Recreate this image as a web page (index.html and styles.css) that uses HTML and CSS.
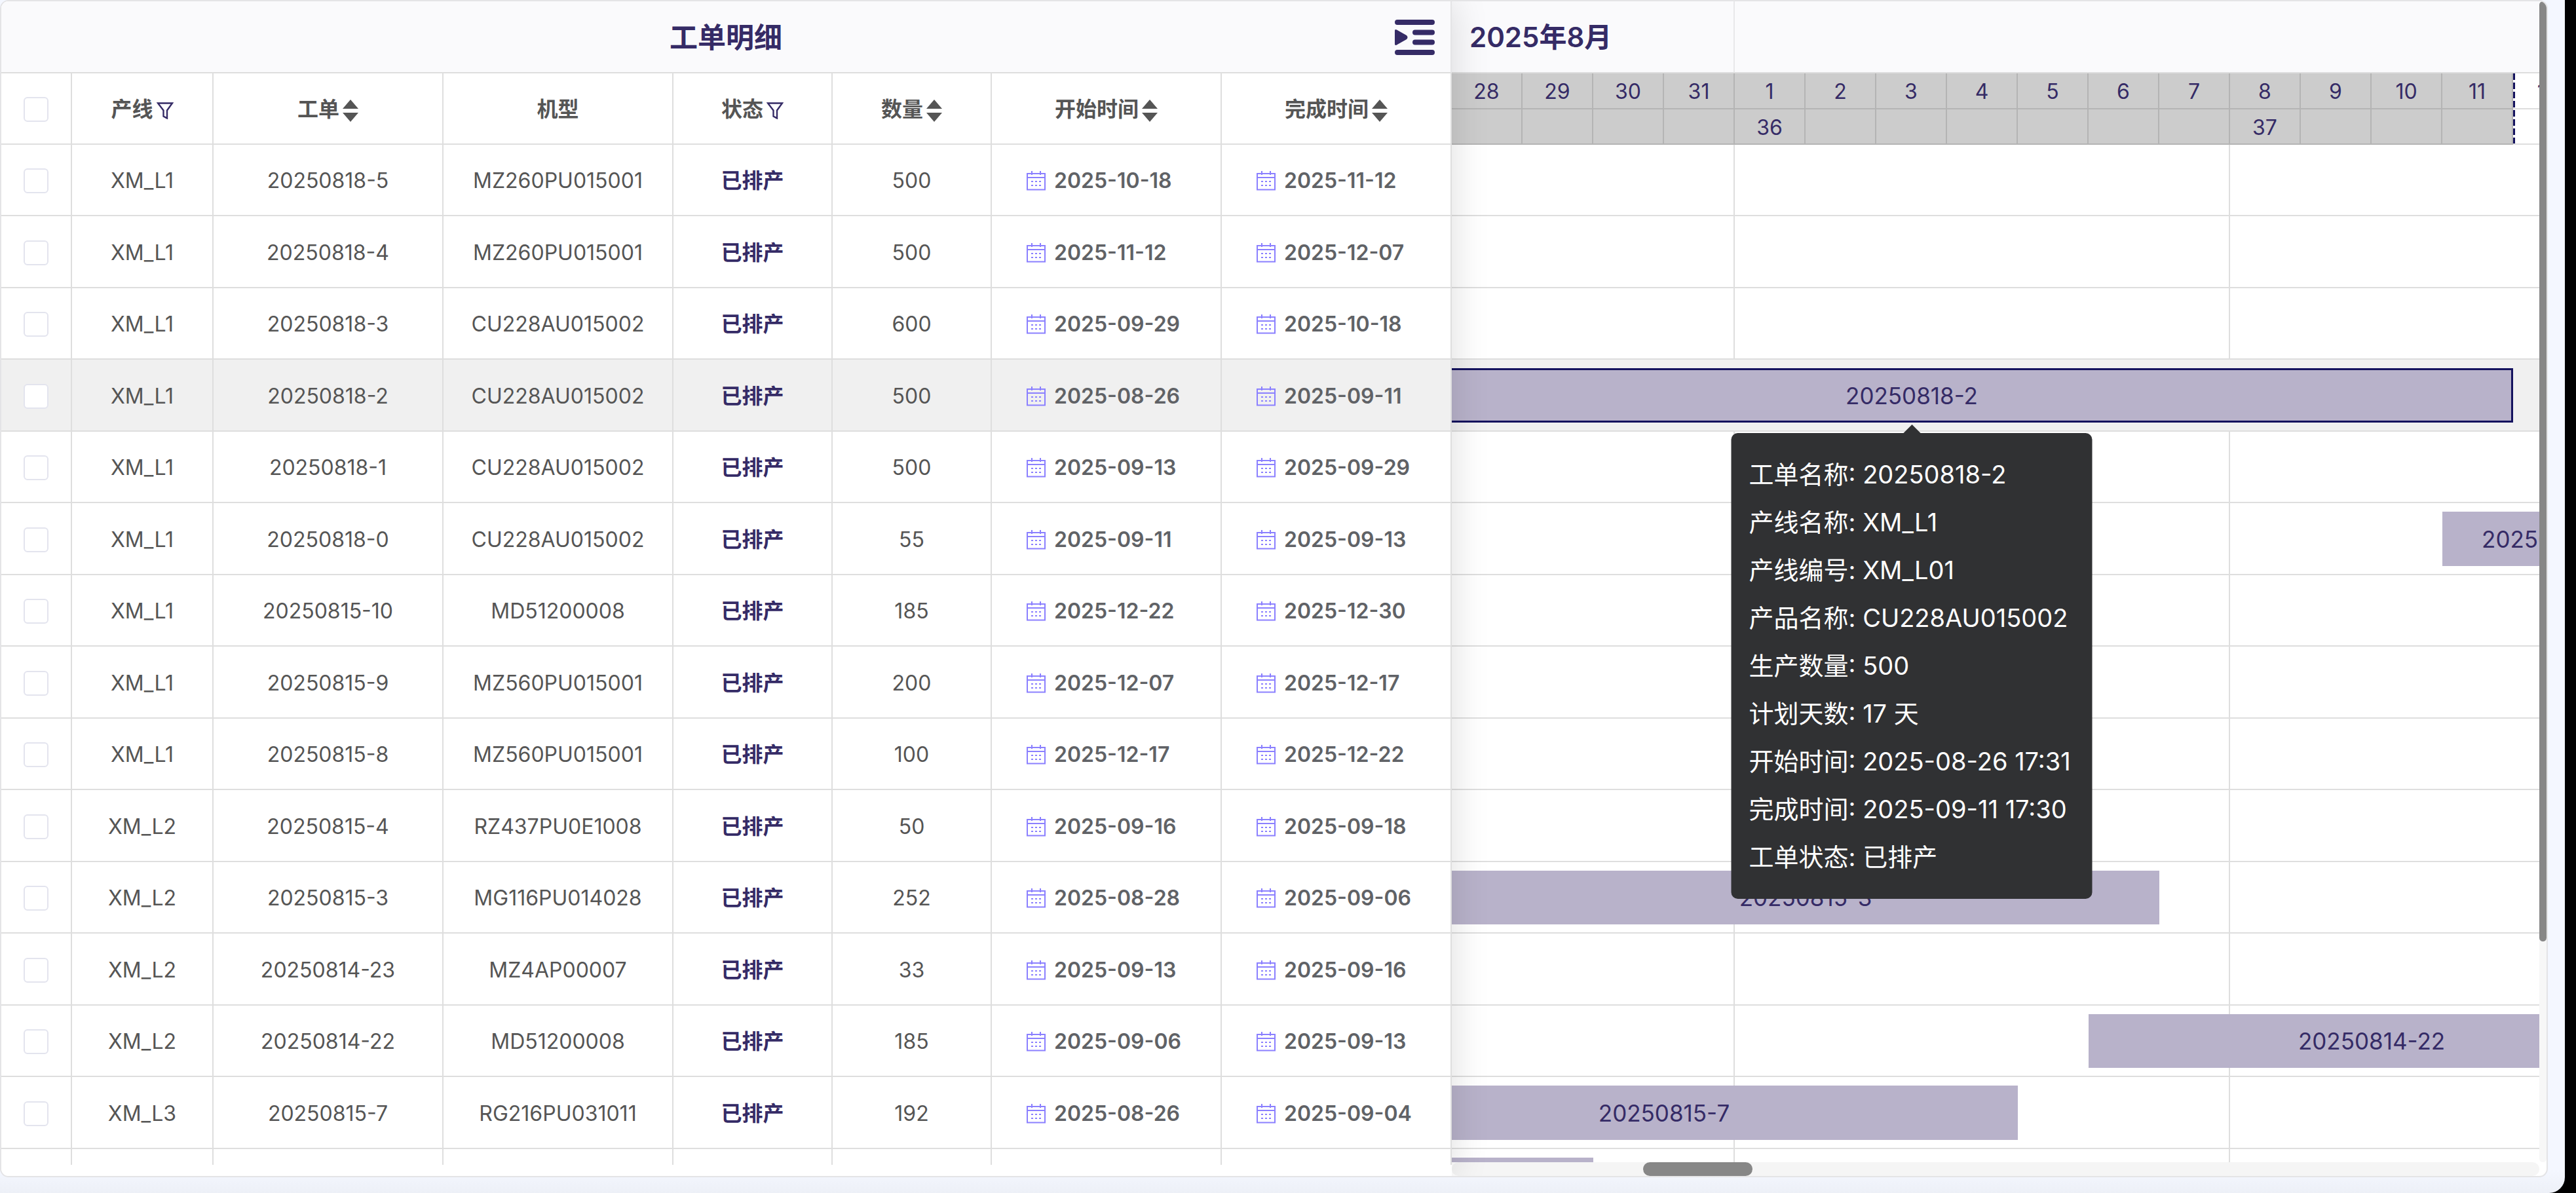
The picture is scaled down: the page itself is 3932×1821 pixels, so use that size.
FILE: index.html
```
<!DOCTYPE html>
<html lang="zh-CN">
    <head>
        <meta charset="utf-8">
        <title>工单明细</title>
        <link rel="stylesheet" href="styles.css">
    </head>
    <body>
        <svg class="icon-defs" width="0" height="0">
            <symbol id="icon-filter" viewBox="0 0 26 26">
                <path d="M2 1.5H24L16 12.5V24.5L10.5 21.5V12.5Z" fill="none" stroke="currentColor" stroke-width="2.4"/>
            </symbol>
            <symbol id="icon-sort" viewBox="0 0 24 34">
                <path d="M12 0L24 14H0ZM12 34L24 20H0Z" fill="currentColor"/>
            </symbol>
            <symbol id="icon-calendar" viewBox="0 0 29 30">
                <path d="M1 4H28V28.500H1ZM1 10H28M8 0V6M21 0V6" fill="none" stroke="currentColor" stroke-width="2"/>
                <path d="M7 16h3M13 16h3M19 16h3M7 22h3M13 22h3M19 22h3" fill="none" stroke="currentColor" stroke-width="2"/>
            </symbol>
            <symbol id="icon-indent" viewBox="0 0 61 54">
                <path d="M4 4H57M31 19.500H57M31 34.500H57M4 50H57" fill="none" stroke="currentColor" stroke-width="8" stroke-linecap="round"/>
                <path d="M0 17Q0 14 3 15.500L18 24Q21 27 18 30L3 38.500Q0 40 0 37Z" fill="currentColor"/>
            </symbol>
        </svg>
        <div class="page">
            <div class="card">
                <div class="orders">
                    <div class="orders-title">
                        <h1>工单明细</h1>
                        <button class="collapse-button" aria-label="收起"><svg><use href="#icon-indent"/></svg></button>
                    </div>
                    <div class="orders-table">
                        <table>
                            <colgroup>
                                <col class="col-check">
                                <col class="col-line">
                                <col class="col-wide">
                                <col class="col-wide">
                                <col class="col-mid">
                                <col class="col-mid">
                                <col class="col-wide">
                                <col class="col-wide">
                            </colgroup>
                            <thead>
                                <tr>
                                    <th><input type="checkbox" aria-label="全选"></th>
                                    <th>产线<button class="head-button" aria-label="筛选产线"><svg class="filter"><use href="#icon-filter"/></svg></button></th>
                                    <th>工单<button class="head-button" aria-label="排序工单"><svg class="sort"><use href="#icon-sort"/></svg></button></th>
                                    <th>机型</th>
                                    <th>状态<button class="head-button" aria-label="筛选状态"><svg class="filter"><use href="#icon-filter"/></svg></button></th>
                                    <th>数量<button class="head-button" aria-label="排序数量"><svg class="sort"><use href="#icon-sort"/></svg></button></th>
                                    <th>开始时间<button class="head-button" aria-label="排序开始时间"><svg class="sort"><use href="#icon-sort"/></svg></button></th>
                                    <th>完成时间<button class="head-button" aria-label="排序完成时间"><svg class="sort"><use href="#icon-sort"/></svg></button></th>
                                </tr>
                            </thead>
                            <tbody id="order-rows"></tbody>
                        </table>
                    </div>
                </div>
                <div class="gantt">
                    <div class="gantt-main">
                        <div class="months">
                            <div class="month">2025年8月</div>
                        </div>
                        <div class="days" id="days"></div>
                        <div class="timeline">
                            <div id="gantt-rows"></div>
                        </div>
                        <div class="scroll-x"><div class="thumb-x"></div></div>
                    </div>
                    <div class="scroll-y"><div class="thumb-y"></div></div>
                </div>
            </div>
        </div>
        <script src="script.js"></script>
    </body>
</html>
```
FILE: styles.css
```
* {
    box-sizing: border-box;
    margin: 0;
}

body {
    height: 100vh;
    padding-right: 17px;
    overflow: hidden;
    background-color: #000;
    font-family: Inter, "Noto Sans CJK SC", sans-serif;
    font-size: 32px;
    color: #555;
}

button {
    padding: 0;
    border: none;
    background: none;
    cursor: pointer;
}

svg {
    display: block;
}

.icon-defs {
    position: absolute;
}

.page {
    height: 100vh;
    padding: 0 26px 24px 0;
    border-radius: 0 0 24px 0;
    background: linear-gradient(#f4f7ff 98%, #edf0f7);
}

.card {
    display: flex;
    height: 100%;
    overflow: hidden;
    border: 2px solid #e4e4e6;
    border-radius: 13px;
    background-color: #fff;
}

/* left: work orders */
.orders {
    position: relative;
    z-index: 1;
    display: flex;
    flex-direction: column;
    flex: none;
    background-color: #fff;
    box-shadow: 0 0 54px rgba(0, 0, 0, 0.14);
}

.orders-title {
    display: grid;
    grid-template-columns: 1fr auto 1fr;
    align-items: center;
    flex: none;
    height: 110px;
    padding: 2px 24px 0;
    border-right: 2px solid #e4e4e6;
    border-bottom: 2px solid #dedede;
    background-color: #fafafc;
    color: #352b66;
}

.orders-title h1 {
    grid-column: 2;
    font-size: 43px;
    font-weight: 600;
    line-height: 52px;
}

.collapse-button {
    justify-self: end;
    color: #352b66;
}

.collapse-button svg {
    width: 61px;
    height: 54px;
}

.orders-table {
    flex: 1;
    min-height: 0;
    margin-bottom: 17px;
    overflow: hidden;
}

table {
    width: 2214px;
    table-layout: fixed;
    border-collapse: separate;
    border-spacing: 0;
}

.col-check {
    width: 108px;
}

.col-line {
    width: 216px;
}

.col-mid {
    width: 243px;
}

.col-wide {
    width: 351px;
}

th, td {
    height: 109px;
    padding: 3px 0 0;
    border-right: 2px solid #dedede;
    border-bottom: 2px solid #dedede;
    line-height: 40px;
    text-align: center;
    vertical-align: middle;
    white-space: nowrap;
}

tbody tr:nth-child(even) td {
    height: 110px;
}

th {
    font-weight: 600;
}

.head-button {
    margin-left: 5px;
    color: #555;
    vertical-align: middle;
}

.filter {
    width: 26px;
    height: 26px;
    color: #352b66;
}

.sort {
    width: 24px;
    height: 34px;
}

input[type="checkbox"] {
    display: block;
    appearance: none;
    width: 38px;
    height: 38px;
    margin: 0 auto;
    border: 2px solid #e3e4ee;
    border-radius: 6px;
    background-color: #fff;
}

.status {
    font-weight: 600;
    color: #352b66;
}

.date {
    display: flex;
    align-items: center;
    gap: 13px;
    padding-left: 53px;
    color: #8b80ff;
}

.date svg {
    flex: none;
    width: 29px;
    height: 30px;
}

.date input {
    width: 100%;
    min-width: 0;
    padding: 0;
    border: none;
    outline: none;
    background: none;
    font: inherit;
    font-weight: 600;
    color: #606266;
}

.current {
    background-color: #f0f0f0;
}

/* right: gantt */
.gantt {
    display: flex;
    flex: 1;
    min-width: 0;
}

.gantt-main {
    display: flex;
    flex-direction: column;
    flex: 1;
    min-width: 0;
    overflow: hidden;
}

.months {
    flex: none;
    display: flex;
    height: 110px;
    border-bottom: 2px solid #dedede;
    background-color: #fafafc;
}

.month {
    width: 432px;
    padding-left: 27px;
    border-right: 2px solid #e8e8ea;
    font-size: 42px;
    font-weight: 600;
    line-height: 110px;
    color: #352b66;
}

.days {
    display: grid;
    grid-auto-flow: column;
    grid-auto-columns: 108px;
    flex: none;
    color: #352b66;
}

.day span {
    display: block;
    height: 54px;
    border-right: 2px solid #dedede;
    border-bottom: 2px solid #dedede;
    line-height: 56px;
    text-align: center;
}

.day span:first-child {
    height: 55px;
}

.past {
    background-color: #ccc;
}

.past span {
    border-color: #b4b4b4;
}

/* dashed marker on the left edge */
.today {
    background: repeating-linear-gradient(#14125e 0 10px, transparent 10px 14px) no-repeat;
    background-size: 3px 100%;
}

.timeline {
    flex: 1;
    min-height: 0;
    overflow: hidden;
}

/* one column per day, first one is 08-26 */
.gantt-row {
    display: grid;
    grid-template-columns: repeat(20, 108px);
    width: 2160px;
    height: 109px;
    margin-left: -216px;
    padding: 13px 0 12px;
    border-bottom: 2px solid #dedede;
    background-image: linear-gradient(90deg, transparent 754px, #dedede 754px);
    background-position: 648px 0;
    background-size: 756px 100%;
}

.gantt-row:nth-child(even) {
    height: 110px;
}

.gantt-row.current {
    background-image: none;
}

.bar {
    position: relative;
    display: flex;
    align-items: center;
    justify-content: center;
    background-color: #b8b2ca;
    font-size: 35px;
    color: #352b66;
}

.current .bar {
    border: 3px solid #14125e;
}

.tooltip {
    position: absolute;
    top: 96px;
    left: 50%;
    z-index: 2;
    min-width: 551px;
    padding: 27px;
    border-radius: 10px;
    background-color: #303133;
    font-size: 38px;
    line-height: 73px;
    white-space: nowrap;
    color: #fff;
    transform: translateX(-50%);
}

.tooltip::before {
    content: "";
    position: absolute;
    top: -13px;
    left: calc(50% - 14px);
    border: 14px solid transparent;
    border-top: none;
    border-bottom-color: #303133;
}

.scroll-x {
    flex: none;
    height: 21px;
    border-radius: 11px;
    background-color: #f5f5f5;
}

.thumb-x {
    width: 167px;
    height: 100%;
    margin-left: 292px;
    border-radius: 11px;
    background-color: #878787;
}

.scroll-y {
    flex: none;
    width: 11px;
    margin-bottom: 21px;
    border-radius: 6px;
    background-color: #f7f7f7;
}

.thumb-y {
    height: 81%;
    border-radius: 6px;
    background-color: #878787;
}
```
FILE: script.js
```
// cols: first and last grid line of the bar, line 1 is 08-26
const orders = [
    { line: "XM_L1", order: "20250818-5", model: "MZ260PU015001", count: 500, start: "2025-10-18", end: "2025-11-12" },
    { line: "XM_L1", order: "20250818-4", model: "MZ260PU015001", count: 500, start: "2025-11-12", end: "2025-12-07" },
    { line: "XM_L1", order: "20250818-3", model: "CU228AU015002", count: 600, start: "2025-09-29", end: "2025-10-18" },
    { line: "XM_L1", order: "20250818-2", model: "CU228AU015002", count: 500, start: "2025-08-26", end: "2025-09-11", cols: "1 / 18", current: true },
    { line: "XM_L1", order: "20250818-1", model: "CU228AU015002", count: 500, start: "2025-09-13", end: "2025-09-29" },
    { line: "XM_L1", order: "20250818-0", model: "CU228AU015002", count: 55, start: "2025-09-11", end: "2025-09-13", cols: "17 / 20" },
    { line: "XM_L1", order: "20250815-10", model: "MD51200008", count: 185, start: "2025-12-22", end: "2025-12-30" },
    { line: "XM_L1", order: "20250815-9", model: "MZ560PU015001", count: 200, start: "2025-12-07", end: "2025-12-17" },
    { line: "XM_L1", order: "20250815-8", model: "MZ560PU015001", count: 100, start: "2025-12-17", end: "2025-12-22" },
    { line: "XM_L2", order: "20250815-4", model: "RZ437PU0E1008", count: 50, start: "2025-09-16", end: "2025-09-18" },
    { line: "XM_L2", order: "20250815-3", model: "MG116PU014028", count: 252, start: "2025-08-28", end: "2025-09-06", cols: "3 / 13" },
    { line: "XM_L2", order: "20250814-23", model: "MZ4AP00007", count: 33, start: "2025-09-13", end: "2025-09-16" },
    { line: "XM_L2", order: "20250814-22", model: "MD51200008", count: 185, start: "2025-09-06", end: "2025-09-13", cols: "12 / 20" },
    { line: "XM_L3", order: "20250815-7", model: "RG216PU031011", count: 192, start: "2025-08-26", end: "2025-09-04", cols: "1 / 11" }
];

const tooltip = `<div class="tooltip" role="tooltip">
    <p>工单名称: 20250818-2</p>
    <p>产线名称: XM_L1</p>
    <p>产线编号: XM_L01</p>
    <p>产品名称: CU228AU015002</p>
    <p>生产数量: 500</p>
    <p>计划天数: 17 天</p>
    <p>开始时间: 2025-08-26 17:31</p>
    <p>完成时间: 2025-09-11 17:30</p>
    <p>工单状态: 已排产</p>
</div>`;

const days = [28, 29, 30, 31, 1, 2, 3, 4, 5, 6, 7, 8, 9, 10, 11, 12];
const weeks = { 1: 36, 8: 37 };

function dateCell(label, value) {
    return `<td><label class="date"><svg><use href="#icon-calendar"/></svg><input type="text" aria-label="${label}" value="${value}"></label></td>`;
}

function orderRow(o) {
    return `<tr class="${o.current ? "current" : ""}">
        <td><input type="checkbox" aria-label="${o.order}"></td>
        <td>${o.line}</td>
        <td>${o.order}</td>
        <td>${o.model}</td>
        <td class="status">已排产</td>
        <td>${o.count}</td>
        ${dateCell("开始时间", o.start)}
        ${dateCell("完成时间", o.end)}
    </tr>`;
}

function ganttRow(o) {
    const bar = o.cols ? `<div class="bar" style="grid-column: ${o.cols}">${o.order}${o.current ? tooltip : ""}</div>` : "";
    return `<div class="gantt-row ${o.current ? "current" : ""}">${bar}</div>`;
}

function dayCell(day) {
    return `<div class="day ${day === 12 ? "today" : "past"}"><span>${day}</span><span>${weeks[day] || ""}</span></div>`;
}

// the next row is cut off by the bottom edge
const nextOrder = "<tr>" + "<td></td>".repeat(8) + "</tr>";
const nextBar = '<div class="gantt-row"><div class="bar" style="grid-column: 1 / 5"></div></div>';

document.getElementById("order-rows").innerHTML = orders.map(orderRow).join("") + nextOrder;
document.getElementById("gantt-rows").innerHTML = orders.map(ganttRow).join("") + nextBar;
document.getElementById("days").innerHTML = days.map(dayCell).join("");
```
